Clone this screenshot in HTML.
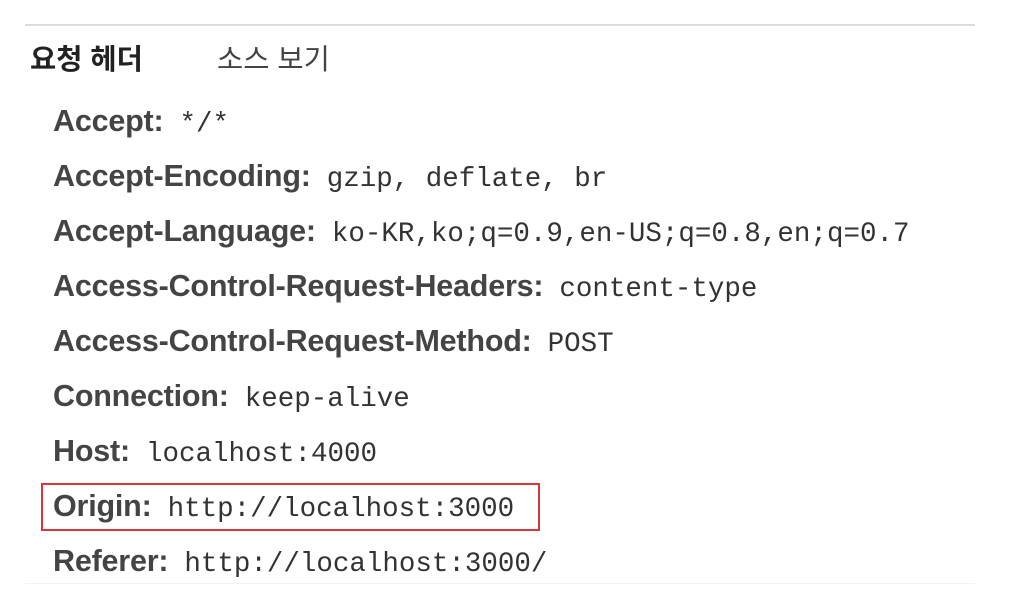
<!DOCTYPE html>
<html><head><meta charset="utf-8"><style>
body{margin:0;width:1012px;height:606px;background:#fff;position:relative;overflow:hidden;font-family:"Liberation Sans","Noto Sans CJK KR",sans-serif}
.top{position:absolute;left:25px;top:24px;width:950px;height:2px;background:#dcdcdc}
.bot{position:absolute;left:25px;top:583px;width:950px;height:1px;background:#f2f2f2}
.h{position:absolute;top:43px;font-size:28.5px;color:#222;line-height:34px}
.r{position:absolute;left:53px;height:34px;line-height:34px;white-space:nowrap;color:#444}
.r b{font-size:30.5px;font-weight:bold;color:#444;letter-spacing:-0.2px}
.r span{font-family:"Liberation Mono",monospace;font-size:27.5px;color:#333;margin-left:16px}
.box{position:absolute;left:41px;top:483px;width:495px;height:44px;border:2px solid #d9353a}
</style></head><body>
<div class="top"></div>
<div class="h" style="left:30px;font-weight:bold">요청 헤더</div>
<div class="h" style="left:217px;color:#444">소스 보기</div>
<div class="r" style="top:104px"><b>Accept:</b><span>*/*</span></div>
<div class="r" style="top:159px"><b>Accept-Encoding:</b><span>gzip, deflate, br</span></div>
<div class="r" style="top:214px"><b>Accept-Language:</b><span>ko-KR,ko;q=0.9,en-US;q=0.8,en;q=0.7</span></div>
<div class="r" style="top:269px"><b>Access-Control-Request-Headers:</b><span>content-type</span></div>
<div class="r" style="top:324px"><b>Access-Control-Request-Method:</b><span>POST</span></div>
<div class="r" style="top:379px"><b>Connection:</b><span>keep-alive</span></div>
<div class="r" style="top:434px"><b>Host:</b><span>localhost:4000</span></div>
<div class="r" style="top:489px"><b>Origin:</b><span>http://localhost:3000</span></div>
<div class="r" style="top:544px"><b>Referer:</b><span>http://localhost:3000/</span></div>
<div class="box"></div>
<div class="bot"></div>
</body></html>
